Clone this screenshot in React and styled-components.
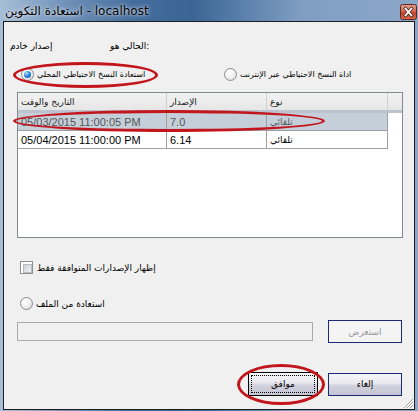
import React from 'react';
import styled, { createGlobalStyle } from 'styled-components';

const Global = createGlobalStyle`
  html, body { margin: 0; padding: 0; width: 418px; height: 411px; overflow: hidden; background: #fff; }
  #root { width: 418px; height: 411px; }
  * { box-sizing: border-box; }
`;

const Win = styled.div`
  position: relative;
  width: 418px;
  height: 411px;
  display: flex;
  flex-direction: column;
  padding: 0 3px 1px 3px;
  background: linear-gradient(90deg, #a7bfd8 0%, #7596bc 14%, #446d9c 32%, #3b6595 46%, #5a80ac 58%, #7f9ec2 72%, #8aa7c8 100%);
  font-family: "DejaVu Sans", sans-serif;
  color: #000;
`;

const TitleBar = styled.div`
  height: 21px;
  display: flex;
  align-items: center;
  justify-content: space-between;
  padding-left: 2px;
  margin-right: -2px;
`;

const Title = styled.div`
  font-size: 12px;
  color: #000;
  text-shadow: 0 0 5px rgba(255,255,255,0.8), 0 0 2px rgba(255,255,255,0.6);
  white-space: nowrap;
  padding-top: 1px;
`;

const CloseBtn = styled.div`
  width: 17px;
  height: 16px;
  display: flex;
  margin-top: 2px;
`;

const Client = styled.div`
  position: relative;
  flex: 1;
  border: 1px solid #1e1e1e;
  background: #f0f0f0;
  display: flex;
  flex-direction: column;
  font-size: 9px;
`;

const InfoRow = styled.div`
  margin-top: 17px;
  height: 14px;
  padding-left: 6px;
  display: grid;
  grid-template-columns: 100px auto;
  align-items: center;
`;

const Txt = styled.span`
  white-space: nowrap;
  font-size: ${p => (p.$size ? `${p.$size}px` : 'inherit')};
  color: ${p => (p.$dim ? '#8c8c8c' : '#000')};
`;

const OptionRow = styled.div`
  margin-top: ${p => p.$mt}px;
  height: ${p => p.$h}px;
  padding-left: ${p => p.$pl}px;
  display: grid;
  grid-template-columns: ${p => p.$cols || 'auto'};
  justify-content: start;
  align-items: center;
`;

const Choice = styled.label`
  display: flex;
  align-items: center;
  gap: ${p => p.$gap || 3}px;
  white-space: nowrap;
`;

const RadioDot = styled.span`
  width: 13px;
  height: 13px;
  border-radius: 50%;
  border: 1px solid #8a8c8e;
  background: radial-gradient(circle at 40% 35%, #ffffff 0%, #f4f4f4 40%, #d6d6d6 100%);
  display: flex;
  align-items: center;
  justify-content: center;
  flex: none;
  &::after {
    content: '';
    display: ${p => (p.$on ? 'block' : 'none')};
    width: 7px;
    height: 7px;
    border-radius: 50%;
    background: radial-gradient(circle at 35% 30%, #b7e3ff 0%, #2d8ae0 45%, #0d3f86 100%);
  }
`;

const CheckBox = styled.span`
  width: 13px;
  height: 13px;
  border: 1px solid #8e8f8f;
  background: #fff;
  padding: 2px;
  flex: none;
  &::after {
    content: '';
    display: block;
    width: 100%;
    height: 100%;
    background: linear-gradient(135deg, #cbcfd5 0%, #f2f3f4 100%);
    border: 1px solid #b8bcc2;
  }
`;

const ListView = styled.div`
  margin: 11px 11px 0 13px;
  height: 146px;
  border: 1px solid #828790;
  background: #fff;
  display: flex;
  flex-direction: column;
  font-size: 9px;
`;

const HeaderRow = styled.div`
  height: 20px;
  display: grid;
  grid-template-columns: 149px 100px 121px 1fr;
  background: linear-gradient(#f2f2f2, #e6e6e6);
  border-bottom: 3px solid #bcc3cf;
`;

const HeadCell = styled.div`
  display: flex;
  align-items: center;
  padding-left: 3px;
  border-right: ${p => (p.$last ? 'none' : '1px solid #d0d0d0')};
  white-space: nowrap;
  color: #1a1a1a;
`;

const DataRow = styled.div`
  height: 18px;
  width: 370px;
  display: grid;
  grid-template-columns: 149px 100px 121px;
  background: ${p => (p.$sel ? '#c5cfda' : '#fff')};
  border-bottom: 1px solid #a0a0a0;
  border-right: 1px solid #a0a0a0;
  color: ${p => (p.$sel ? '#555' : '#000')};
`;

const Cell = styled.div`
  display: flex;
  align-items: center;
  padding-left: 3px;
  border-right: ${p => (p.$last ? 'none' : '1px solid #a0a0a0')};
  white-space: nowrap;
  font-family: ${p => (p.$latin ? '"Liberation Sans", sans-serif' : 'inherit')};
  font-size: ${p => (p.$latin ? '11px' : 'inherit')};
`;

const InputRow = styled.div`
  margin-top: 11px;
  height: 23px;
  padding: 0 12px 0 13px;
  display: flex;
  align-items: center;
  justify-content: space-between;
`;

const PathInput = styled.div`
  width: 296px;
  height: 19px;
  border: 1px solid #a9a9a9;
  background: #f0f0f0;
`;

const ButtonRow = styled.div`
  margin-top: 29px;
  height: 24px;
  padding-right: 12px;
  display: flex;
  justify-content: flex-end;
  align-items: center;
  gap: 10px;
`;

const Btn = styled.div`
  width: ${p => p.$w}px;
  height: ${p => p.$h || 23}px;
  border: 1px solid ${p => (p.$focus ? '#000' : '#1b2a78')};
  background: ${p => (p.$disabled ? '#f4f4f4' : 'linear-gradient(#f6f6f8 0%, #e8e8ee 45%, #d2d2dd 55%, #c4c4d4 100%)')};
  color: ${p => (p.$disabled ? '#9a9a9a' : '#000')};
  display: flex;
  align-items: center;
  justify-content: center;
  white-space: nowrap;
  padding: 2px;
`;

const FocusRect = styled.div`
  width: 100%;
  height: 100%;
  border: 1px dotted #000;
  display: flex;
  align-items: center;
  justify-content: center;
`;

const Ellipse = styled.div`
  position: absolute;
  left: ${p => p.$x}px;
  top: ${p => p.$y}px;
  width: ${p => p.$w}px;
  height: ${p => p.$h}px;
  border: 3px solid #c3151c;
  border-radius: 50%;
  pointer-events: none;
`;

const Grip = styled.svg`
  position: absolute;
  right: 0;
  bottom: 0;
`;

export default function App() {
  return (
    <>
      <Global />
      <Win>
        <TitleBar>
          <Title>استعادة التكوين - localhost</Title>
          <CloseBtn>
            <svg width="17" height="16" viewBox="0 0 17 16">
              <defs>
                <linearGradient id="cg" x1="0" y1="0" x2="0" y2="1">
                  <stop offset="0" stopColor="#e8a18f" />
                  <stop offset="0.45" stopColor="#d3684e" />
                  <stop offset="0.55" stopColor="#c4432a" />
                  <stop offset="1" stopColor="#d86a48" />
                </linearGradient>
              </defs>
              <rect x="0.5" y="0.5" width="16" height="15" rx="2" fill="url(#cg)" stroke="#5a2a22" />
              <path d="M5.5 4.5 L11.5 11.5 M11.5 4.5 L5.5 11.5" stroke="#3a1f1a" strokeWidth="3.2" strokeLinecap="square" />
              <path d="M5.5 4.5 L11.5 11.5 M11.5 4.5 L5.5 11.5" stroke="#fff" strokeWidth="1.8" strokeLinecap="square" />
            </svg>
          </CloseBtn>
        </TitleBar>
        <Client>
          <InfoRow>
            <Txt>إصدار خادم</Txt>
            <Txt>الحالي هو:</Txt>
          </InfoRow>
          <OptionRow $mt={14} $h={14} $pl={17} $cols="203px auto">
            <Choice>
              <RadioDot $on />
              <Txt $size={8}>استعادة النسخ الاحتياطي المحلي</Txt>
            </Choice>
            <Choice>
              <RadioDot />
              <Txt $size={8}>اداة النسخ الاحتياطي عبر الإنترنت</Txt>
            </Choice>
          </OptionRow>
          <ListView>
            <HeaderRow>
              <HeadCell>التاريخ والوقت</HeadCell>
              <HeadCell>الإصدار</HeadCell>
              <HeadCell>نوع</HeadCell>
              <HeadCell $last />
            </HeaderRow>
            <DataRow $sel>
              <Cell $latin>05/03/2015 11:00:05 PM</Cell>
              <Cell $latin>7.0</Cell>
              <Cell $last>تلقائي</Cell>
            </DataRow>
            <DataRow>
              <Cell $latin>05/04/2015 11:00:00 PM</Cell>
              <Cell $latin>6.14</Cell>
              <Cell $last>تلقائي</Cell>
            </DataRow>
          </ListView>
          <OptionRow $mt={23} $h={13} $pl={16}>
            <Choice $gap={4}>
              <CheckBox />
              <Txt>إظهار الإصدارات المتوافقة فقط</Txt>
            </Choice>
          </OptionRow>
          <OptionRow $mt={23} $h={12} $pl={16}>
            <Choice>
              <RadioDot />
              <Txt>استعادة من الملف</Txt>
            </Choice>
          </OptionRow>
          <InputRow>
            <PathInput />
            <Btn $w={74} $disabled>استعرض</Btn>
          </InputRow>
          <ButtonRow>
            <Btn $w={70} $h={24} $focus>
              <FocusRect>موافق</FocusRect>
            </Btn>
            <Btn $w={74}>إلغاء</Btn>
          </ButtonRow>
          <Ellipse $x={9} $y={40} $w={145} $h={26} />
          <Ellipse $x={9} $y={88} $w={312} $h={22} />
          <Ellipse $x={233} $y={342} $w={88} $h={41} />
          <Grip width="12" height="12" viewBox="0 0 12 12">
            <path d="M11 2 L2 11 M11 5 L5 11 M11 8 L8 11" stroke="#a0a0a0" strokeWidth="1" />
            <path d="M11 3 L3 11 M11 6 L6 11 M11 9 L9 11" stroke="#fff" strokeWidth="1" />
          </Grip>
        </Client>
      </Win>
    </>
  );
}
